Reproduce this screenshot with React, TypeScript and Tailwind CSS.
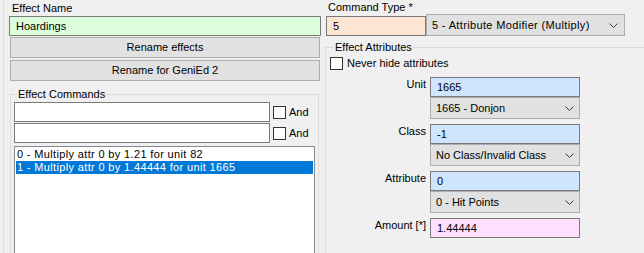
import React from "react";

function Chevron() {
  return (
    <svg width="9" height="5" viewBox="0 0 9 5" className="shrink-0">
      <path d="M0.5 0.5 L4.5 4.5 L8.5 0.5" fill="none" stroke="#3c3c3c" strokeWidth="1" />
    </svg>
  );
}

function Dropdown({ value, className = "" }: { value: string; className?: string }) {
  return (
    <div
      className={`flex items-center justify-between border border-[#adadad] bg-[#e1e1e1] pl-[5px] pr-[5px] ${className}`}
    >
      <span className="whitespace-nowrap">{value}</span>
      <Chevron />
    </div>
  );
}

function TextBox({ value, className = "" }: { value: string; className?: string }) {
  return (
    <div className={`flex items-center border border-[#7a7a7a] pl-[6px] ${className}`}>
      <span className="whitespace-nowrap">{value}</span>
    </div>
  );
}

function CheckBox({ className = "" }: { className?: string }) {
  return <div className={`h-[13px] w-[13px] shrink-0 border border-[#333333] bg-white ${className}`} />;
}

function AttrRow({
  label,
  value,
  option,
  color,
  className = "",
}: {
  label: string;
  value: string;
  option?: string;
  color: string;
  className?: string;
}) {
  return (
    <div className={`flex items-start ${className}`}>
      <div className="w-[100px] text-right leading-[14px]">{label}</div>
      <div className="ml-[4px] w-[150px]">
        <TextBox value={value} className={`h-[20px] ${color}`} />
        {option && <Dropdown value={option} className="h-[22px]" />}
      </div>
    </div>
  );
}

export default function App() {
  return (
    <div className="flex h-[253px] w-[644px] overflow-hidden bg-[#f0f0f0] font-['Liberation_Sans',Arial,sans-serif] text-[11px] text-black">
      {/* left side */}
      <div className="ml-[3px] w-[319px] shrink-0 border-l border-[#dcdcdc]">
        <div className="ml-[8px] mt-[1px] h-[14px] leading-[14px]">Effect Name</div>
        <TextBox value="Hoardings" className="ml-[5px] mt-[1px] h-[20px] w-[312px] bg-[#dcfedc]" />
        <button className="ml-[6px] mt-[1px] block h-[21px] w-[310px] border border-[#adadad] bg-[#e1e1e1] text-center">
          Rename effects
        </button>
        <button className="ml-[6px] mt-[2px] block h-[21px] w-[310px] border border-[#adadad] bg-[#e1e1e1] text-center">
          Rename for GeniEd 2
        </button>
        <fieldset className="ml-[6px] mt-[6px] h-[200px] w-[309px] border border-[#dcdcdc]">
          <legend className="ml-[6px] px-[1px] leading-[14px]">Effect Commands</legend>
          <div className="ml-[3px] mt-[1px] flex flex-col gap-[1px]">
            {[0, 1].map((i) => (
              <div key={i} className="flex h-[20px] items-center">
                <div className="h-[20px] w-[256px] border border-[#7a7a7a] bg-white" />
                <CheckBox className="ml-[3px]" />
                <span className="ml-[3px]">And</span>
              </div>
            ))}
          </div>
          <div className="ml-[3px] mt-[3px] h-[120px] w-[301px] border border-[#828790] bg-white p-[1px] tracking-[0.35px]">
            <div className="h-[13px] whitespace-nowrap px-[1px] leading-[13px]">
              0 - Multiply attr 0 by 1.21 for unit 82
            </div>
            <div className="h-[13px] whitespace-nowrap bg-[#0078d7] px-[1px] leading-[13px] text-white">
              1 - Multiply attr 0 by 1.44444 for unit 1665
            </div>
          </div>
        </fieldset>
      </div>

      {/* right side */}
      <div className="w-[322px] shrink-0">
        <div className="ml-[6px] mt-[1px] h-[13px] leading-[13px]">Command Type *</div>
        <div className="flex items-start">
          <TextBox value="5" className="ml-[4px] mt-[2px] h-[20px] w-[100px] bg-[#fee4d2] pl-[5px]" />
          <Dropdown
            value="5 - Attribute Modifier (Multiply)"
            className="h-[22px] w-[199px] pr-[6px] tracking-[0.35px]"
          />
        </div>
        <fieldset className="ml-[3px] mt-[4px] h-[220px] w-[330px] border border-[#dcdcdc]">
          <legend className="ml-[8px] px-[1px] leading-[14px]">Effect Attributes</legend>
          <div className="ml-[4px] mt-[3px] flex h-[13px] items-center">
            <CheckBox />
            <span className="ml-[4px]">Never hide attributes</span>
          </div>
          <div className="mt-[7px] flex flex-col gap-[5px]">
            <AttrRow label="Unit" value="1665" option="1665 - Donjon" color="bg-[#cfe4fd]" />
            <AttrRow label="Class" value="-1" option="No Class/Invalid Class" color="bg-[#cfe4fd]" />
            <AttrRow label="Attribute" value="0" option="0 - Hit Points" color="bg-[#cfe4fd]" />
            <AttrRow label="Amount [*]" value="1.44444" color="bg-[#fee0fe]" />
          </div>
        </fieldset>
      </div>
    </div>
  );
}
